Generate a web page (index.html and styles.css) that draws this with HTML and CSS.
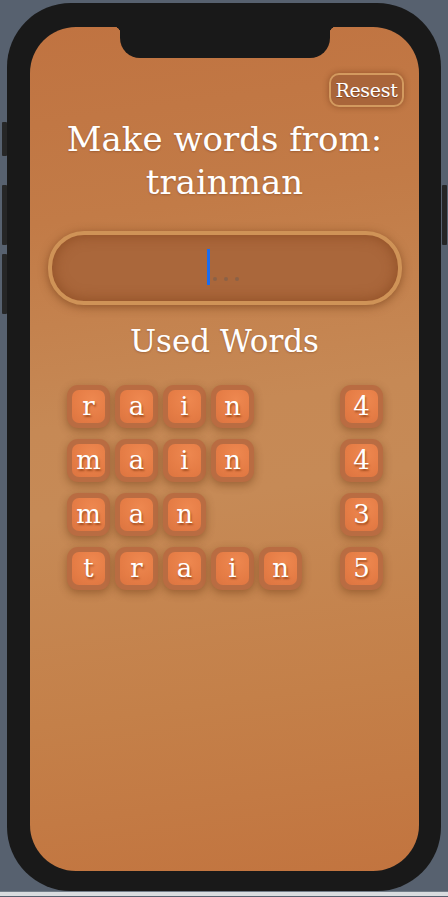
FILE: index.html
```html
<!DOCTYPE html>
<html>
<head>
<meta charset="utf-8">
<link rel="stylesheet" href="styles.css">
</head>
<body>
<div class="stage">
  <div class="phone">
    <span class="btn btn-a"></span>
    <span class="btn btn-b"></span>
    <span class="btn btn-c"></span>
    <span class="btn btn-d"></span>
    <div class="screen">
      <div class="notch"></div>
      <div class="topbar"><button class="reset">Resest</button></div>
      <h1 class="title">Make words from:<br>trainman</h1>
      <div class="input-wrap">
        <div class="input"><span class="caret"></span><span class="dots"><i></i><i></i><i></i></span></div>
      </div>
      <h2 class="used">Used Words</h2>
      <div class="words">
        <div class="row">
          <div class="letters"><span class="tile"><span>r</span></span><span class="tile"><span>a</span></span><span class="tile"><span>i</span></span><span class="tile"><span>n</span></span></div>
          <span class="tile"><span>4</span></span>
        </div>
        <div class="row">
          <div class="letters"><span class="tile"><span>m</span></span><span class="tile"><span>a</span></span><span class="tile"><span>i</span></span><span class="tile"><span>n</span></span></div>
          <span class="tile"><span>4</span></span>
        </div>
        <div class="row">
          <div class="letters"><span class="tile"><span>m</span></span><span class="tile"><span>a</span></span><span class="tile"><span>n</span></span></div>
          <span class="tile"><span>3</span></span>
        </div>
        <div class="row">
          <div class="letters"><span class="tile"><span>t</span></span><span class="tile"><span>r</span></span><span class="tile"><span>a</span></span><span class="tile"><span>i</span></span><span class="tile"><span>n</span></span></div>
          <span class="tile"><span>5</span></span>
        </div>
      </div>
    </div>
  </div>
</div>
<div class="strip"></div>
</body>
</html>
```
FILE: styles.css
```css
html, body {
  margin: 0;
  padding: 0;
  background: #57616f;
  width: 448px;
  height: 897px;
  overflow: hidden;
  font-family: "DejaVu Serif", serif;
}
.stage {
  height: 892px;
  display: flex;
  align-items: flex-start;
  padding-left: 7px;
  box-sizing: border-box;
  border-bottom: 1px solid #737d89;
}
.strip {
  height: 4px;
  background: #d9dcdf;
}
.phone {
  position: relative;
  margin-top: 3px;
  width: 434px;
  height: 888px;
  box-sizing: border-box;
  padding: 24px 22px 20px 23px;
  background: #191919;
  border-radius: 64px;
}
.btn {
  position: absolute;
  width: 5px;
  background: #262626;
  border-radius: 1px;
}
.btn-a { left: -5px; top: 119px; height: 34px; }
.btn-b { left: -5px; top: 182px; height: 60px; }
.btn-c { left: -5px; top: 251px; height: 60px; }
.btn-d { right: -6px; top: 182px; height: 60px; }
.screen {
  position: relative;
  height: 844px;
  border-radius: 46px;
  overflow: hidden;
  background: linear-gradient(172deg, #c07341 0%, #c27b47 22%, #c68955 45%, #c68a56 55%, #c48049 78%, #c2743f 100%);
  display: flex;
  flex-direction: column;
  align-items: center;
  color: #fff;
}
.notch {
  position: absolute;
  left: 90px;
  top: 0;
  width: 210px;
  height: 31px;
  background: #191919;
  border-radius: 0 0 20px 20px;
}
.notch::before, .notch::after {
  content: "";
  position: absolute;
  top: 0;
  width: 6px;
  height: 6px;
}
.notch::before { left: -6px; background: radial-gradient(circle at 0 100%, transparent 6px, #191919 6.5px); }
.notch::after { right: -6px; background: radial-gradient(circle at 100% 100%, transparent 6px, #191919 6.5px); }
.topbar {
  align-self: stretch;
  display: flex;
  justify-content: flex-end;
  padding: 46px 15px 0 0;
}
.reset {
  font-family: "DejaVu Serif", serif;
  font-size: 19px;
  color: #fff;
  background: #a9653a;
  border: 2px solid #d39a5f;
  border-radius: 10px;
  height: 34px;
  width: 75px;
  padding: 0;
  letter-spacing: -0.3px;
  box-shadow: 0 0 6px rgba(90, 40, 10, 0.45);
  text-shadow: 0 1px 1px rgba(60, 20, 0, 0.4);
}
.title {
  margin: 11px 0 0;
  font-family: "DejaVu Serif", serif;
  font-weight: normal;
  font-size: 34px;
  line-height: 43px;
  text-align: center;
  text-shadow: 0 1px 2px rgba(80, 30, 0, 0.3);
}
.input-wrap {
  align-self: stretch;
  padding: 0 17px 0 18px;
  margin-top: 27px;
}
.input {
  height: 66px;
  border: 4px solid #cf9357;
  border-radius: 36px;
  background: #aa673b;
  box-shadow: 0 2px 10px rgba(100, 50, 15, 0.55), inset 0 0 14px rgba(130, 65, 25, 0.7);
  display: flex;
  align-items: center;
  justify-content: center;
  padding-right: 4px;
}
.caret {
  width: 3px;
  height: 36px;
  background: #1a6cf0;
  margin-top: -2px;
}
.dots {
  display: flex;
  gap: 7px;
  margin-left: 3px;
  margin-top: 22px;
}
.dots i {
  width: 4px;
  height: 4px;
  border-radius: 50%;
  background: #8c6146;
}
.used {
  margin: 16px 0 0;
  font-family: "DejaVu Serif", serif;
  font-weight: normal;
  font-size: 31px;
  line-height: 40px;
  text-shadow: 0 1px 2px rgba(80, 30, 0, 0.3);
}
.words {
  align-self: stretch;
  margin-top: 24px;
  padding: 0 36px 0 37px;
  display: flex;
  flex-direction: column;
  gap: 11px;
}
.row {
  display: flex;
  justify-content: space-between;
}
.letters {
  display: flex;
  gap: 5px;
}
.tile {
  width: 43px;
  height: 43px;
  box-sizing: border-box;
  padding: 5px;
  border-radius: 11px;
  background: #b96c42;
  box-shadow: 0 3px 8px rgba(100, 50, 15, 0.45);
  display: flex;
}
.tile span {
  flex: 1;
  border-radius: 7px;
  background: radial-gradient(circle at 60% 30%, #ee8850 0%, #e57c45 60%, #dc7440 100%);
  display: flex;
  align-items: center;
  justify-content: center;
  font-family: "DejaVu Serif", serif;
  font-size: 26px;
  line-height: 1;
  color: #fff;
  text-shadow: 1px 2px 2px rgba(110, 40, 0, 0.55);
  padding-bottom: 2px;
}
```
